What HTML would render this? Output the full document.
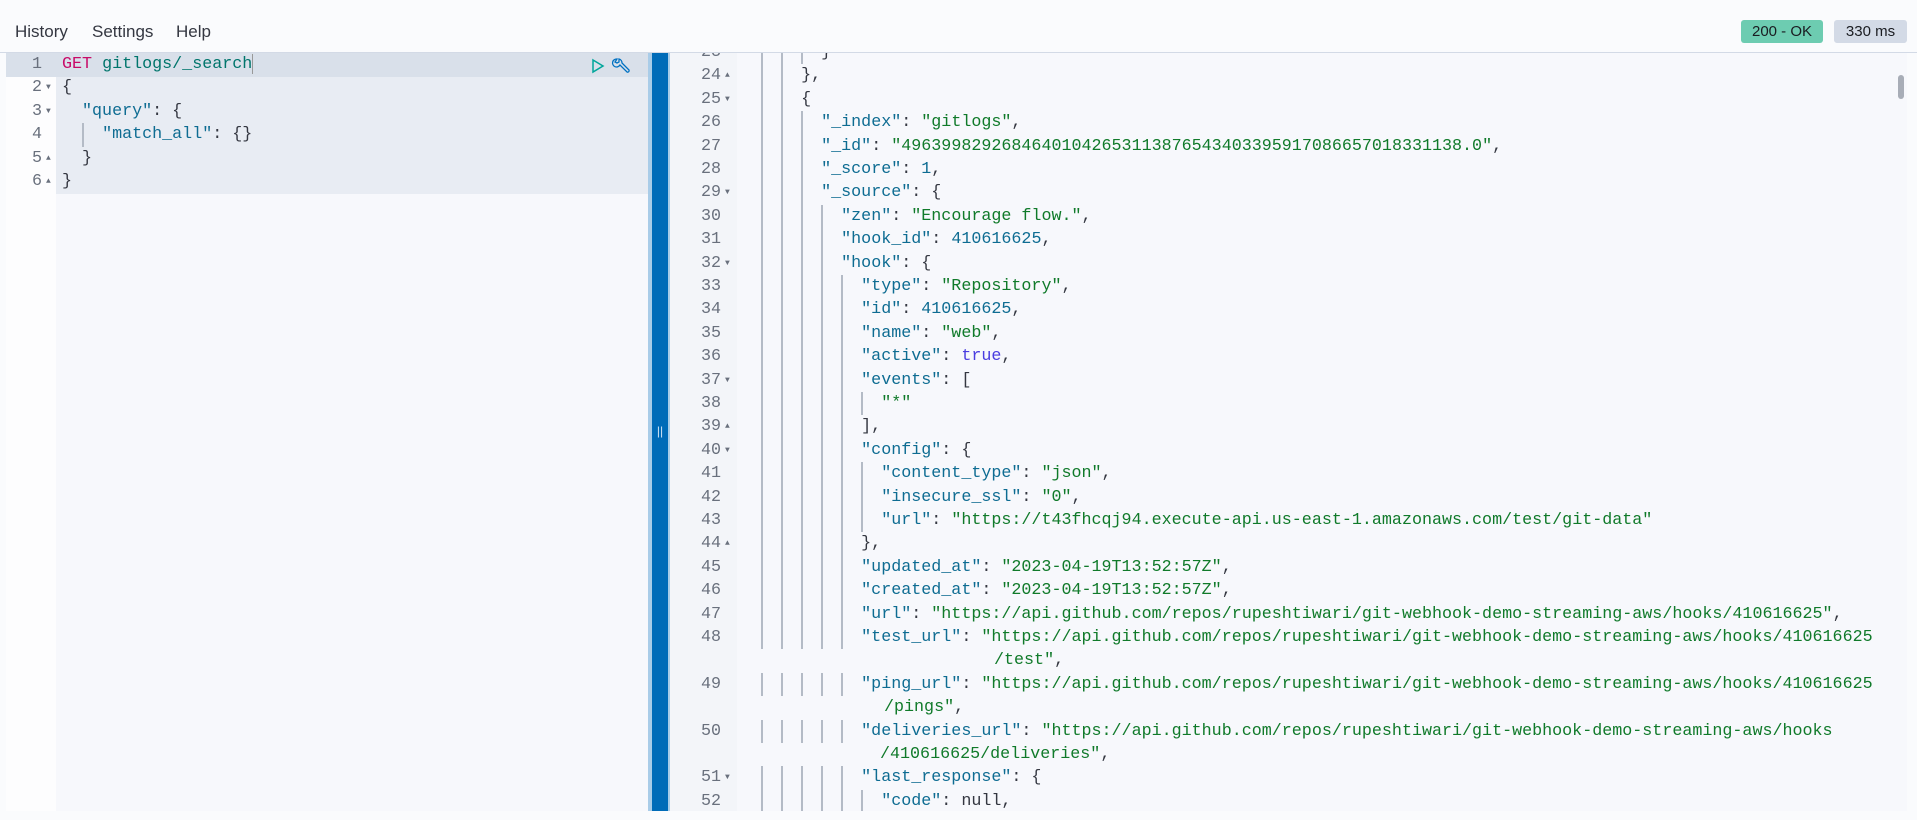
<!DOCTYPE html>
<html><head><meta charset="utf-8"><style>
*{margin:0;padding:0;box-sizing:border-box}
body{width:1917px;height:820px;overflow:hidden;background:#fafbfd;font-family:"Liberation Sans",sans-serif;position:relative}
.menu{position:absolute;top:22px;font-size:17px;color:#343741}
.badge{position:absolute;top:20px;height:23px;border-radius:3px;font-size:15px;line-height:23px;text-align:center;color:#1a1c21}
.mono{font-family:"Liberation Mono",monospace;font-size:16.7px;white-space:pre}
.r{position:absolute;height:23.4px;line-height:23.4px}
.ln{position:absolute;width:40px;text-align:right;color:#69707d;height:23.4px;line-height:23.4px}
.ar{position:absolute;font-size:8px;color:#69707d;height:23.4px;line-height:23.4px}
.g{position:absolute;top:0;width:2px;height:23.4px;background:#b4bbc6}
.k{color:#0e6c92}.s{color:#107a2a}.n{color:#0e6c92}.p{color:#343741}.t{color:#4a3de0}
</style></head><body>
<div style="position:absolute;left:0;top:0;width:1917px;height:53px;background:#fafbfd;border-bottom:1px solid #d3dae6"></div>
<div class="menu" style="left:15px">History</div>
<div class="menu" style="left:92px">Settings</div>
<div class="menu" style="left:176px">Help</div>
<div class="badge" style="left:1741px;width:82px;background:#6dccb1">200 - OK</div>
<div class="badge" style="left:1834px;width:73px;background:#d3dae6">330 ms</div>

<!-- left panel -->
<div style="position:absolute;left:6px;top:53px;width:642px;height:758px;background:#f7f8fc"></div>
<div style="position:absolute;left:6px;top:53px;width:50px;height:758px;background:#fdfdfe"></div>
<div style="position:absolute;left:56px;top:53px;width:592px;height:141px;background:#e8ecf3"></div>
<div style="position:absolute;left:6px;top:53px;width:642px;height:24px;background:#d9e0ea"></div>
<div class="mono">
<div class="ln" style="left:2px;top:53px">1</div>
<div class="ln" style="left:2px;top:76.4px">2</div><div class="ar" style="left:46px;top:76.4px">▼</div>
<div class="ln" style="left:2px;top:99.8px">3</div><div class="ar" style="left:46px;top:99.8px">▼</div>
<div class="ln" style="left:2px;top:123.2px">4</div>
<div class="ln" style="left:2px;top:146.6px">5</div><div class="ar" style="left:46px;top:146.6px">▲</div>
<div class="ln" style="left:2px;top:170px">6</div><div class="ar" style="left:46px;top:170px">▲</div>
<div class="r" style="left:62px;top:53px"><span style="color:#c80a68">GET</span> <span style="color:#00756c">gitlogs/_search</span><span style="display:inline-block;width:1px;height:20px;background:#999;vertical-align:middle"></span></div>
<div class="r p" style="left:62px;top:76.4px">{</div>
<div class="r" style="left:62px;top:99.8px">  <span class="k">"query"</span><span class="p">: {</span></div>
<div class="r" style="left:62px;top:123.2px"><span class="g" style="left:20px"></span>    <span class="k">"match_all"</span><span class="p">: {}</span></div>
<div class="r p" style="left:62px;top:146.6px">  }</div>
<div class="r p" style="left:62px;top:170px">}</div>
</div>
<svg style="position:absolute;left:591px;top:58px" width="14" height="16" viewBox="0 0 14 16"><path d="M2 2 L12 8 L2 14 Z" fill="none" stroke="#00a69b" stroke-width="1.5"/></svg>
<svg style="position:absolute;left:611px;top:57px" width="20" height="20" viewBox="0 0 20 20"><path d="M6 2 a4 4 0 1 0 3 6 l7 7 a1.5 1.5 0 0 0 2 -2 l-7 -7 a4 4 0 0 0 -3 -4 l0 3 -2 1 -2 -1z" fill="none" stroke="#0071c2" stroke-width="1.3"/></svg>

<!-- divider -->
<div style="position:absolute;left:648px;top:53px;width:22px;height:758px;background:#a9cce8"></div>
<div style="position:absolute;left:652px;top:53px;width:16px;height:758px;background:#006bb8"></div>
<div style="position:absolute;left:656px;top:424px;width:8px;height:14px;color:#cfe2f3;font-size:12px;line-height:14px;text-align:center">||</div>

<!-- right panel -->
<div style="position:absolute;left:670px;top:53px;width:1237px;height:758px;overflow:hidden;background:#f7f8fc">
<div style="position:absolute;left:0;top:0;width:67px;height:758px;background:#f3f5f9"></div>
<div style="position:absolute;left:1228px;top:22px;width:6px;height:24px;border-radius:3px;background:#a8adb7"></div>
<div class="mono" style="position:absolute;left:-670px;top:-53px">
<div class="ln" style="left:681px;top:41px">23</div>
<div class="ln" style="left:681px;top:64.4px">24</div><div class="ar" style="left:725px;top:64.4px">▲</div>
<div class="ln" style="left:681px;top:87.8px">25</div><div class="ar" style="left:725px;top:87.8px">▼</div>
<div class="ln" style="left:681px;top:111.2px">26</div>
<div class="ln" style="left:681px;top:134.6px">27</div>
<div class="ln" style="left:681px;top:158px">28</div>
<div class="ln" style="left:681px;top:181.4px">29</div><div class="ar" style="left:725px;top:181.4px">▼</div>
<div class="ln" style="left:681px;top:204.8px">30</div>
<div class="ln" style="left:681px;top:228.2px">31</div>
<div class="ln" style="left:681px;top:251.6px">32</div><div class="ar" style="left:725px;top:251.6px">▼</div>
<div class="ln" style="left:681px;top:275px">33</div>
<div class="ln" style="left:681px;top:298.4px">34</div>
<div class="ln" style="left:681px;top:321.8px">35</div>
<div class="ln" style="left:681px;top:345.2px">36</div>
<div class="ln" style="left:681px;top:368.6px">37</div><div class="ar" style="left:725px;top:368.6px">▼</div>
<div class="ln" style="left:681px;top:392px">38</div>
<div class="ln" style="left:681px;top:415.4px">39</div><div class="ar" style="left:725px;top:415.4px">▲</div>
<div class="ln" style="left:681px;top:438.8px">40</div><div class="ar" style="left:725px;top:438.8px">▼</div>
<div class="ln" style="left:681px;top:462.2px">41</div>
<div class="ln" style="left:681px;top:485.6px">42</div>
<div class="ln" style="left:681px;top:509px">43</div>
<div class="ln" style="left:681px;top:532.4px">44</div><div class="ar" style="left:725px;top:532.4px">▲</div>
<div class="ln" style="left:681px;top:555.8px">45</div>
<div class="ln" style="left:681px;top:579.2px">46</div>
<div class="ln" style="left:681px;top:602.6px">47</div>
<div class="ln" style="left:681px;top:626px">48</div>
<div class="ln" style="left:681px;top:672.8px">49</div>
<div class="ln" style="left:681px;top:719.6px">50</div>
<div class="ln" style="left:681px;top:766.4px">51</div><div class="ar" style="left:725px;top:766.4px">▼</div>
<div class="ln" style="left:681px;top:789.8px">52</div>

<div class="r" style="left:741px;top:41px"><span class="g" style="left:20px"></span><span class="g" style="left:40px"></span><span class="g" style="left:60px"></span><span class="p">        }</span></div>
<div class="r" style="left:741px;top:64.4px"><span class="g" style="left:20px"></span><span class="g" style="left:40px"></span><span class="p">      },</span></div>
<div class="r" style="left:741px;top:87.8px"><span class="g" style="left:20px"></span><span class="g" style="left:40px"></span><span class="p">      {</span></div>
<div class="r" style="left:741px;top:111.2px"><span class="g" style="left:20px"></span><span class="g" style="left:40px"></span><span class="g" style="left:60px"></span>        <span class="k">"_index"</span><span class="p">: </span><span class="s">"gitlogs"</span><span class="p">,</span></div>
<div class="r" style="left:741px;top:134.6px"><span class="g" style="left:20px"></span><span class="g" style="left:40px"></span><span class="g" style="left:60px"></span>        <span class="k">"_id"</span><span class="p">: </span><span class="s">"49639982926846401042653113876543403395917086657018331138.0"</span><span class="p">,</span></div>
<div class="r" style="left:741px;top:158px"><span class="g" style="left:20px"></span><span class="g" style="left:40px"></span><span class="g" style="left:60px"></span>        <span class="k">"_score"</span><span class="p">: </span><span class="n">1</span><span class="p">,</span></div>
<div class="r" style="left:741px;top:181.4px"><span class="g" style="left:20px"></span><span class="g" style="left:40px"></span><span class="g" style="left:60px"></span>        <span class="k">"_source"</span><span class="p">: {</span></div>
<div class="r" style="left:741px;top:204.8px"><span class="g" style="left:20px"></span><span class="g" style="left:40px"></span><span class="g" style="left:60px"></span><span class="g" style="left:80px"></span>          <span class="k">"zen"</span><span class="p">: </span><span class="s">"Encourage flow."</span><span class="p">,</span></div>
<div class="r" style="left:741px;top:228.2px"><span class="g" style="left:20px"></span><span class="g" style="left:40px"></span><span class="g" style="left:60px"></span><span class="g" style="left:80px"></span>          <span class="k">"hook_id"</span><span class="p">: </span><span class="n">410616625</span><span class="p">,</span></div>
<div class="r" style="left:741px;top:251.6px"><span class="g" style="left:20px"></span><span class="g" style="left:40px"></span><span class="g" style="left:60px"></span><span class="g" style="left:80px"></span>          <span class="k">"hook"</span><span class="p">: {</span></div>
<div class="r" style="left:741px;top:275px"><span class="g" style="left:20px"></span><span class="g" style="left:40px"></span><span class="g" style="left:60px"></span><span class="g" style="left:80px"></span><span class="g" style="left:100px"></span>            <span class="k">"type"</span><span class="p">: </span><span class="s">"Repository"</span><span class="p">,</span></div>
<div class="r" style="left:741px;top:298.4px"><span class="g" style="left:20px"></span><span class="g" style="left:40px"></span><span class="g" style="left:60px"></span><span class="g" style="left:80px"></span><span class="g" style="left:100px"></span>            <span class="k">"id"</span><span class="p">: </span><span class="n">410616625</span><span class="p">,</span></div>
<div class="r" style="left:741px;top:321.8px"><span class="g" style="left:20px"></span><span class="g" style="left:40px"></span><span class="g" style="left:60px"></span><span class="g" style="left:80px"></span><span class="g" style="left:100px"></span>            <span class="k">"name"</span><span class="p">: </span><span class="s">"web"</span><span class="p">,</span></div>
<div class="r" style="left:741px;top:345.2px"><span class="g" style="left:20px"></span><span class="g" style="left:40px"></span><span class="g" style="left:60px"></span><span class="g" style="left:80px"></span><span class="g" style="left:100px"></span>            <span class="k">"active"</span><span class="p">: </span><span class="t">true</span><span class="p">,</span></div>
<div class="r" style="left:741px;top:368.6px"><span class="g" style="left:20px"></span><span class="g" style="left:40px"></span><span class="g" style="left:60px"></span><span class="g" style="left:80px"></span><span class="g" style="left:100px"></span>            <span class="k">"events"</span><span class="p">: [</span></div>
<div class="r" style="left:741px;top:392px"><span class="g" style="left:20px"></span><span class="g" style="left:40px"></span><span class="g" style="left:60px"></span><span class="g" style="left:80px"></span><span class="g" style="left:100px"></span><span class="g" style="left:120px"></span>              <span class="s">"*"</span></div>
<div class="r" style="left:741px;top:415.4px"><span class="g" style="left:20px"></span><span class="g" style="left:40px"></span><span class="g" style="left:60px"></span><span class="g" style="left:80px"></span><span class="g" style="left:100px"></span><span class="p">            ],</span></div>
<div class="r" style="left:741px;top:438.8px"><span class="g" style="left:20px"></span><span class="g" style="left:40px"></span><span class="g" style="left:60px"></span><span class="g" style="left:80px"></span><span class="g" style="left:100px"></span>            <span class="k">"config"</span><span class="p">: {</span></div>
<div class="r" style="left:741px;top:462.2px"><span class="g" style="left:20px"></span><span class="g" style="left:40px"></span><span class="g" style="left:60px"></span><span class="g" style="left:80px"></span><span class="g" style="left:100px"></span><span class="g" style="left:120px"></span>              <span class="k">"content_type"</span><span class="p">: </span><span class="s">"json"</span><span class="p">,</span></div>
<div class="r" style="left:741px;top:485.6px"><span class="g" style="left:20px"></span><span class="g" style="left:40px"></span><span class="g" style="left:60px"></span><span class="g" style="left:80px"></span><span class="g" style="left:100px"></span><span class="g" style="left:120px"></span>              <span class="k">"insecure_ssl"</span><span class="p">: </span><span class="s">"0"</span><span class="p">,</span></div>
<div class="r" style="left:741px;top:509px"><span class="g" style="left:20px"></span><span class="g" style="left:40px"></span><span class="g" style="left:60px"></span><span class="g" style="left:80px"></span><span class="g" style="left:100px"></span><span class="g" style="left:120px"></span>              <span class="k">"url"</span><span class="p">: </span><span class="s">"https://t43fhcqj94.execute-api.us-east-1.amazonaws.com/test/git-data"</span></div>
<div class="r" style="left:741px;top:532.4px"><span class="g" style="left:20px"></span><span class="g" style="left:40px"></span><span class="g" style="left:60px"></span><span class="g" style="left:80px"></span><span class="g" style="left:100px"></span><span class="p">            },</span></div>
<div class="r" style="left:741px;top:555.8px"><span class="g" style="left:20px"></span><span class="g" style="left:40px"></span><span class="g" style="left:60px"></span><span class="g" style="left:80px"></span><span class="g" style="left:100px"></span>            <span class="k">"updated_at"</span><span class="p">: </span><span class="s">"2023-04-19T13:52:57Z"</span><span class="p">,</span></div>
<div class="r" style="left:741px;top:579.2px"><span class="g" style="left:20px"></span><span class="g" style="left:40px"></span><span class="g" style="left:60px"></span><span class="g" style="left:80px"></span><span class="g" style="left:100px"></span>            <span class="k">"created_at"</span><span class="p">: </span><span class="s">"2023-04-19T13:52:57Z"</span><span class="p">,</span></div>
<div class="r" style="left:741px;top:602.6px"><span class="g" style="left:20px"></span><span class="g" style="left:40px"></span><span class="g" style="left:60px"></span><span class="g" style="left:80px"></span><span class="g" style="left:100px"></span>            <span class="k">"url"</span><span class="p">: </span><span class="s">"https://api.github.com/repos/rupeshtiwari/git-webhook-demo-streaming-aws/hooks/410616625"</span><span class="p">,</span></div>
<div class="r" style="left:741px;top:626px"><span class="g" style="left:20px"></span><span class="g" style="left:40px"></span><span class="g" style="left:60px"></span><span class="g" style="left:80px"></span><span class="g" style="left:100px"></span>            <span class="k">"test_url"</span><span class="p">: </span><span class="s">"https://api.github.com/repos/rupeshtiwari/git-webhook-demo-streaming-aws/hooks/410616625</span></div>
<div class="r" style="left:994px;top:649.4px"><span class="s">/test"</span><span class="p">,</span></div>
<div class="r" style="left:741px;top:672.8px"><span class="g" style="left:20px"></span><span class="g" style="left:40px"></span><span class="g" style="left:60px"></span><span class="g" style="left:80px"></span><span class="g" style="left:100px"></span>            <span class="k">"ping_url"</span><span class="p">: </span><span class="s">"https://api.github.com/repos/rupeshtiwari/git-webhook-demo-streaming-aws/hooks/410616625</span></div>
<div class="r" style="left:884px;top:696.2px"><span class="s">/pings"</span><span class="p">,</span></div>
<div class="r" style="left:741px;top:719.6px"><span class="g" style="left:20px"></span><span class="g" style="left:40px"></span><span class="g" style="left:60px"></span><span class="g" style="left:80px"></span><span class="g" style="left:100px"></span>            <span class="k">"deliveries_url"</span><span class="p">: </span><span class="s">"https://api.github.com/repos/rupeshtiwari/git-webhook-demo-streaming-aws/hooks</span></div>
<div class="r" style="left:880px;top:743px"><span class="s">/410616625/deliveries"</span><span class="p">,</span></div>
<div class="r" style="left:741px;top:766.4px"><span class="g" style="left:20px"></span><span class="g" style="left:40px"></span><span class="g" style="left:60px"></span><span class="g" style="left:80px"></span><span class="g" style="left:100px"></span>            <span class="k">"last_response"</span><span class="p">: {</span></div>
<div class="r" style="left:741px;top:789.8px"><span class="g" style="left:20px"></span><span class="g" style="left:40px"></span><span class="g" style="left:60px"></span><span class="g" style="left:80px"></span><span class="g" style="left:100px"></span><span class="g" style="left:120px"></span>              <span class="k">"code"</span><span class="p">: null,</span></div>
</div>
</div>
</body></html>
